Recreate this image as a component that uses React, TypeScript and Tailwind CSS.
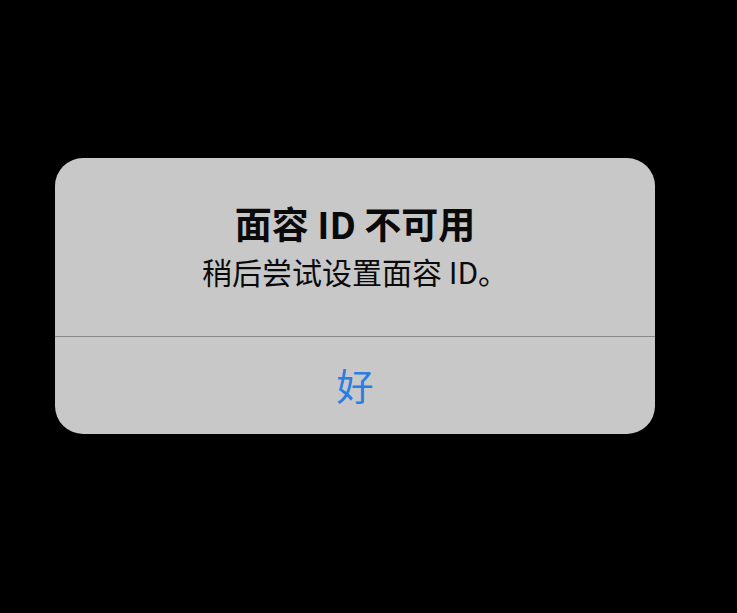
export default function App() {
  return (
    <main
      className="w-[737px] h-[613px] bg-black pt-[158px] pl-[55px]"
      style={{ fontFamily: '"Noto Sans CJK SC", "Noto Sans", sans-serif' }}
    >
      <div className="w-[600px] h-[276px] rounded-[28px] bg-[#c8c8c8] flex flex-col overflow-hidden">
        <div className="h-[178px] pt-[47px] flex flex-col items-center text-[#0a0a0a]">
          <h1 className="text-[37px] leading-[37px] font-bold">面容 ID 不可用</h1>
          <p className="mt-[14px] text-[30px] leading-[30px]">稍后尝试设置面容 ID。</p>
        </div>
        <div className="h-px bg-[#8a8a8a]" />
        <button className="flex-1 flex items-center justify-center text-[37px] leading-[37px] text-[#2a7de1]">
          好
        </button>
      </div>
    </main>
  );
}
